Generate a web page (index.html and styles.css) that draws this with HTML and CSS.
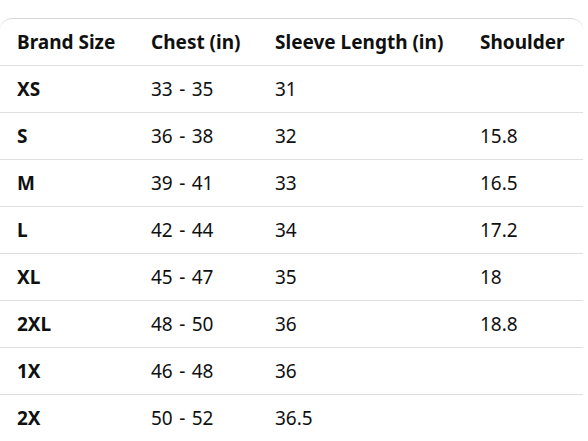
FILE: index.html
```html
<!DOCTYPE html>
<html>
<head>
<meta charset="utf-8">
<link rel="stylesheet" href="styles.css">
</head>
<body>
<div class="wrap">
<table class="sizes">
<colgroup>
<col class="c1"><col class="c2"><col class="c3"><col class="c4">
</colgroup>
<thead>
<tr><th>Brand Size</th><th>Chest (in)</th><th>Sleeve Length (in)</th><th>Shoulder</th></tr>
</thead>
<tbody>
<tr><td class="sz">XS</td><td>33 - 35</td><td>31</td><td></td></tr>
<tr><td class="sz">S</td><td>36 - 38</td><td>32</td><td>15.8</td></tr>
<tr><td class="sz">M</td><td>39 - 41</td><td>33</td><td>16.5</td></tr>
<tr><td class="sz">L</td><td>42 - 44</td><td>34</td><td>17.2</td></tr>
<tr><td class="sz">XL</td><td>45 - 47</td><td>35</td><td>18</td></tr>
<tr><td class="sz">2XL</td><td>48 - 50</td><td>36</td><td>18.8</td></tr>
<tr><td class="sz">1X</td><td>46 - 48</td><td>36</td><td></td></tr>
<tr><td class="sz">2X</td><td>50 - 52</td><td>36.5</td><td></td></tr>
</tbody>
</table>
</div>
</body>
</html>
```
FILE: styles.css
```css
html, body {
  margin: 0;
  padding: 0;
  background: #ffffff;
}
body {
  padding-top: 18px;
  font-family: "Noto Sans", "Open Sans", sans-serif;
  color: #0f1111;
  overflow: hidden;
}
.wrap {
  width: 583px;
  border-top: 1px solid #d5d9d9;
  border-radius: 12px 12px 0 0;
  overflow: hidden;
}
.sizes {
  width: 583px;
  border-collapse: collapse;
  table-layout: fixed;
  font-size: 19px;
  line-height: 24px;
}
.c1 { width: 134px; }
.c2 { width: 124px; }
.c3 { width: 205px; }
.c4 { width: 120px; }
.sizes th,
.sizes td {
  text-align: left;
  padding: 0 0 0 17px;
  height: 46px;
  white-space: nowrap;
  vertical-align: middle;
}
.sizes th {
  font-weight: 700;
  height: 46px;
}
.sizes tbody tr {
  border-top: 1px solid #dddfe0;
}
.sizes tbody td {
  height: 46px;
  font-weight: 400;
  word-spacing: 1.5px;
}
.sizes td.sz {
  font-weight: 700;
  word-spacing: 0;
}
```
